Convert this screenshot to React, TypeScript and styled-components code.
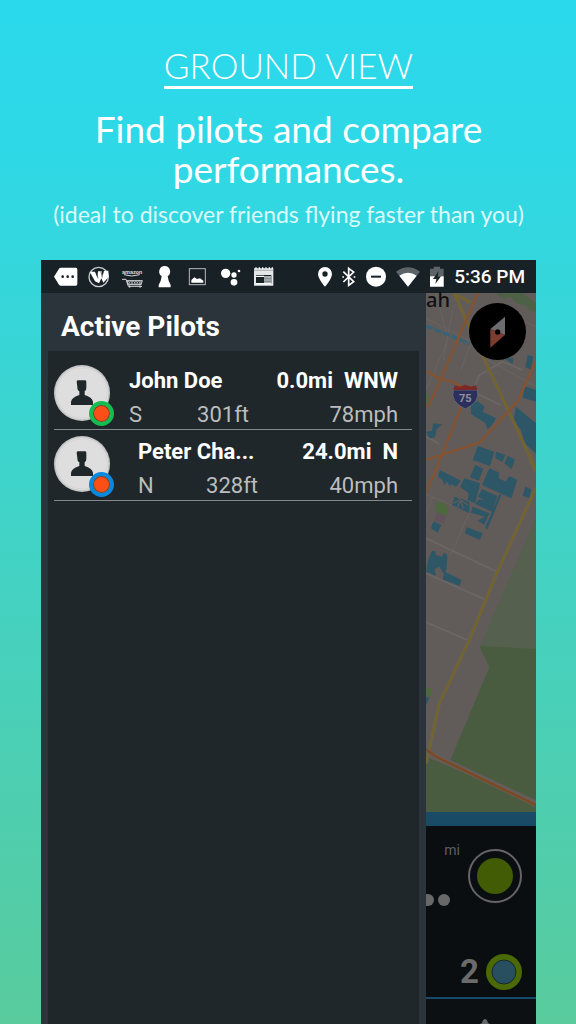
import React from "react";
import styled, { createGlobalStyle } from "styled-components";

const GlobalStyle = createGlobalStyle`
  *, *::before, *::after { box-sizing: border-box; }
  body { margin: 0; background: #59cb9f; }
  h1, h2, p, ul { margin: 0; padding: 0; }
`;

const Page = styled.main`
  min-height: 100vh;
  display: flex;
  flex-direction: column;
  padding: 0 40px 0 41px;
  background: linear-gradient(180deg, #2ad9ec 0%, #2fd8e5 16%, #59cb9d 100%);
  font-family: Roboto, "Liberation Sans", sans-serif;
  color: #fff;
`;

const Intro = styled.header`
  min-height: 260px;
  padding-top: 44px;
  text-align: center;
  font-family: Lato, "Open Sans", sans-serif;
`;

const Title = styled.h1`
  display: inline-block;
  border-bottom: 3px solid #fff;
  font-size: 35px;
  line-height: 42px;
  font-weight: 300;
`;

const Headline = styled.p`
  margin-top: 20px;
  font-size: 37px;
  line-height: 40px;
  font-weight: 400;
`;

const Note = styled.p`
  margin-top: 12px;
  font-size: 23px;
  line-height: 26px;
  font-weight: 400;
  white-space: nowrap;
  color: #dcfafa;
`;

const Phone = styled.section`
  flex: 1;
  display: flex;
  flex-direction: column;
  background: #2b343a;
`;

const StatusBar = styled.div`
  display: flex;
  justify-content: space-between;
  height: 33px;
  padding: 0 11px 0 9px;
  background: #182126;
`;

const StatusGroup = styled.div<{ $gap: number }>`
  display: flex;
  align-items: center;
  gap: ${(p) => p.$gap}px;
`;

const Clock = styled.time`
  font-size: 19px;
  line-height: 35px;
  font-weight: 500;
`;

const Screen = styled.div`
  flex: 1;
  display: grid;
  grid-template-columns: 7fr 2fr;
`;

const Drawer = styled.aside`
  display: flex;
  flex-direction: column;
  min-width: 0;
  padding: 0 7px;
`;

const DrawerTitle = styled.h2`
  height: 58px;
  padding: 5px 14px 0 13px;
  font-size: 28px;
  line-height: 58px;
  font-weight: 700;
`;

const PilotList = styled.ul`
  flex: 1;
  padding: 8px 7px 0 6px;
  list-style: none;
  background: #20272a;
`;

const PilotRow = styled.li`
  display: flex;
  height: 71px;
  border-bottom: 1px solid #85898a;
`;

const Avatar = styled.div`
  position: relative;
  flex: none;
  width: 60px;
  padding-top: 6px;
`;

const Status = styled.span<{ $ring: string }>`
  position: absolute;
  left: 35px;
  top: 42px;
  width: 25px;
  height: 25px;
  border-radius: 50%;
  border: 4px solid ${(p) => p.$ring};
  background: #fc4e17;
  box-shadow: inset 0 0 0 1px #6b4a2c;
`;

const Details = styled.div<{ $indent: number }>`
  flex: 1;
  display: grid;
  grid-template-columns: 120px 1fr;
  grid-template-rows: 32px 32px;
  row-gap: 2px;
  padding: 6px 14px 0 ${(p) => p.$indent}px;
  font-size: 22px;
  line-height: 32px;
  white-space: nowrap;
`;

const Name = styled.strong`
  font-weight: 700;
`;

const Range = styled.strong`
  display: flex;
  justify-content: flex-end;
  gap: 11px;
  font-weight: 700;
`;

const Heading = styled.span`
  display: flex;
  justify-content: space-between;
  color: #bbbdbe;
`;

const Speed = styled.span`
  text-align: right;
  color: #bbbdbe;
`;

const Side = styled.div`
  position: relative;
  display: flex;
  flex-direction: column;
  min-width: 0;
  background: #0a0e10;
`;

const MapView = styled.svg`
  display: block;
  width: 100%;
  height: 519px;
`;

const PlaceLabel = styled.span`
  position: absolute;
  top: 0;
  left: 0;
  font-family: "Noto Sans", sans-serif;
  font-size: 20px;
  line-height: 14px;
  font-weight: 500;
  color: #101010;
`;

const Compass = styled.button`
  position: absolute;
  top: 10px;
  right: 10px;
  width: 57px;
  height: 57px;
  padding: 0;
  border: 0;
  border-radius: 50%;
  background: #000;
`;

const Band = styled.div`
  height: 14px;
  background: #194b67;
`;

const Gauge = styled.div`
  display: flex;
  justify-content: flex-end;
  gap: 7px;
  height: 116px;
  padding: 15px 13px 0 0;
`;

const GaugeText = styled.div`
  display: flex;
  flex-direction: column;
  align-items: flex-end;
  justify-content: space-between;
  height: 65px;
  font-size: 14px;
  line-height: 18px;
  color: #5d6061;
`;

const RoundButton = styled.button`
  flex: none;
  display: block;
  width: 56px;
  height: 56px;
  margin-top: 7px;
  padding: 0;
  border: 0;
  background: none;
`;

const Counter = styled.div`
  display: flex;
  align-items: center;
  justify-content: flex-end;
  gap: 7px;
  height: 57px;
  padding: 4px 14px 0 0;
  border-bottom: 2px solid #17496a;
  font-size: 33px;
  line-height: 40px;
  font-weight: 700;
  color: #6b6b6b;
`;

const NextPanel = styled.div`
  flex: 1;
  display: flex;
  justify-content: center;
  min-height: 25px;
  padding-left: 8px;
  background: #0c1012;
`;

const LEFT_ICONS = [
  <path key="m" d="M42 65 57 41Q59 38 63 38H107Q112 38 112 43V87Q112 92 107 92H63Q59 92 57 89ZM64 65a4 4 0 1 0 8 0 4 4 0 1 0-8 0M79 65a4 4 0 1 0 8 0 4 4 0 1 0-8 0M94 65a4 4 0 1 0 8 0 4 4 0 1 0-8 0" fill="#fff" fillRule="evenodd" />,
  <g key="w">
    <circle cx="176" cy="66" r="29" fill="none" stroke="#c9cdcf" strokeWidth="4" />
    <path d="M149 50H165L172 67 174 49H185L188 64 192 47H205L206 66 190 83 184 70 177 85 165 79Z" fill="#fff" />
    <path d="M168 52 174 70M183 50 187 68" stroke="#182126" strokeWidth="2" />
  </g>,
  <g key="a" fill="none" stroke="#d4d7d8" strokeWidth="3">
    <text x="246" y="56" fontFamily="Roboto, sans-serif" fontSize="17" fontWeight="700" fill="#d4d7d8" stroke="none">amazon</text>
    <path d="M252 59Q275 67 299 59M246 73H258L265 94H306" />
    <path d="M261 77H307L303 89H265Z" />
    <path d="m264 77 8 12 8-12 8 12 8-12 7 12M264 89l8-12 8 12 8-12 8 12 8-12" strokeWidth="2" />
    <circle cx="269" cy="95" r="2" /><circle cx="300" cy="95" r="2" />
  </g>,
  <path key="k" d="M374 33A17 17 0 0 1 383 64Q385 80 392 90V97H356V90Q363 80 365 64A17 17 0 0 1 374 33Z" fill="#fff" />,
  <g key="p">
    <rect x="448" y="41" width="48" height="48" fill="none" stroke="#b5babc" strokeWidth="3" />
    <path d="M454 83V75L463 67 471 72 480 70 490 77V83Z" fill="#fff" />
  </g>,
  <g key="g" fill="#fff">
    <circle cx="557" cy="55" r="14" /><circle cx="582" cy="60" r="8" />
    <circle cx="582" cy="82" r="10" /><circle cx="597" cy="48" r="4" />
  </g>,
  <g key="c">
    <path d="M642 40H700V92H642ZM648 60V86H694V60Z" fill="#e4e6e7" fillRule="evenodd" />
    <path d="M648 43V37M658 43V37M668 43V37M678 43V37M688 43V37M697 43V37" stroke="#fff" strokeWidth="4" />
    <path d="M642 46H700" stroke="#8d9497" strokeWidth="2" />
    <path d="M672 63H694V86H672Z" fill="#a9aeb0" />
    <path d="M648 64H672M648 86H694" stroke="#fff" strokeWidth="4" />
    <path d="M672 71H694M672 79H694" stroke="#6f777b" strokeWidth="2" />
  </g>,
];

const RIGHT_ICONS = [
  { x: 84, w: 14, art: <path d="M105 36A21 21 0 0 0 84 57C84 72 105 95 105 95S126 72 126 57A21 21 0 0 0 105 36ZM105 49a8 8 0 1 1 0 16 8 8 0 1 1 0-16Z" fill="#fff" fillRule="evenodd" /> },
  { x: 159, w: 14, art: <g fill="none" stroke="#fff" strokeWidth="5"><path d="M163 50 194 80 179 91V40L194 51 163 81" /><path d="M160 66h5M194 66h5" /></g> },
  { x: 231, w: 20, art: <g><circle cx="261" cy="65" r="30" fill="#fff" /><path d="M246 65H276" stroke="#182126" strokeWidth="6" /></g> },
  { x: 318, w: 24, art: <g><path d="M318 50Q354 24 390 50L354 95Z" fill="#5c6468" /><path d="M328 62Q354 44 380 62L354 95Z" fill="#fff" /></g> },
  { x: 420, w: 14, art: <g><path d="M420 41H431V35H450V41H461V95H420Z" fill="#5c6468" /><path d="M420 64H461V95H420Z" fill="#fff" /><path d="M446 48 429 72H439L436 87 453 64H443Z" fill="#182126" /></g> },
];

const Person = () => (
  <svg width="56" height="56" viewBox="0 0 168 168" role="img" aria-label="Pilot">
    <circle cx="84" cy="84" r="84" fill="#c6c6c6" />
    <circle cx="84" cy="84" r="79" fill="#dedede" />
    <circle cx="84" cy="84" r="75" fill="none" stroke="#d2d2d2" strokeWidth="2" />
    <path d="M68 50Q68 46 73 46H94Q97 46 97 51V68Q97 77 92 79V90Q114 96 117 110V120H51V110Q54 96 76 90V79Q70 77 70 66Z" fill="#20272a" />
  </svg>
);

const CityMap = () => (
  <MapView viewBox="30 9 330 1557" preserveAspectRatio="xMidYMid slice" role="img" aria-label="Map">
    <rect x="-600" y="9" width="1600" height="1557" fill="#615c59" />
    <path d="M360 680V1140L190 1068Q205 1055 200 1050Z" fill="#55604e" />
    <path d="M360 1077 190 1068 220 1132 103 1410 360 1530ZM30 1400 360 1540V1566H30Z" fill="#4a5c40" />
    <path d="M238 9 262 28 282 20 300 40 325 45 345 62 360 65V38L340 25 320 9Z" fill="#4e6146" />
    <path d="M30 312 40 318 37 333 30 340ZM30 1190 45 1195 46 1212 36 1218 30 1215Z" fill="#4c6a3d" />
    <path d="M58 640 80 636 98 655 92 680 60 667Z" fill="#4f673e" />
    <path d="M62 667 90 678 82 702 55 692Z" fill="#61525b" />
    <g fill="none" stroke="#6a6867" strokeWidth="5">
      <path d="M30 85 200 172M60 9 96 150 30 300M110 60 82 210M190 90 135 240M240 60 360 110M30 612 160 668 102 800M50 622 30 670M180 190 360 290" strokeWidth="2" />
      <path d="M318 240 260 215 190 255 160 330M180 310 255 346M30 440 70 462M30 745 245 846M30 850 205 928M30 997 155 1050" />
    </g>
    <path d="M30 108 135 150 160 162" stroke="#356277" strokeWidth="9" strokeDasharray="22 5" fill="none" />
    <g fill="#2d5667">
      <path d="M165 345 185 333 205 350 200 365 240 385 232 400 215 418 207 398 165 372Z" />
      <path d="M335 195 352 200 345 238 328 232ZM325 288 360 300V335L320 323ZM300 350 360 400V490L325 460 315 420 292 390ZM265 205 292 205 290 222Z" />
      <path d="M185 468 235 485 222 528 170 510ZM240 485 268 495 260 515 238 505ZM275 498 297 508 287 538 265 520Z" />
      <path d="M52 400 78 403 62 418 57 442 40 445 30 425 48 422Z" />
      <path d="M72 540 135 572 120 590 105 582 102 590 92 574 86 586 78 568 66 560Z" />
      <path d="M178 524 202 536 188 572 162 562ZM145 565 192 580 178 640 155 630 158 610 132 590ZM220 535 250 548 248 565 270 575 280 558 304 570 286 625 198 585Z" />
      <path d="M198 597 244 618 228 665 178 642 188 628 205 630 186 620ZM170 650 220 670 205 704 184 692 206 680 165 668ZM250 612 256 615 214 718 207 714ZM116 620 160 635V670L108 645Z" />
      <path d="M153 712 200 730 192 750 146 730ZM328 590 346 598 340 625 320 617ZM52 694 76 705 65 728 45 715Z" />
      <path d="M48 782 60 785 58 795 78 800 84 788 94 795 92 832 86 856 70 830 56 838 60 857 30 845 38 805ZM86 845 137 870 130 888 80 868ZM30 1221 41 1223 30 1246Z" />
    </g>
    <path d="M130 630 112 640M132 632 125 652M134 632 142 656M134 630 156 646M132 628 124 618" stroke="#615c59" strokeWidth="4" />
    <g fill="none">
      <path d="M115 9 150 90 360 540M115 12 165 38M342 509 360 545M360 592 240 855 160 1050 70 1240 30 1420" stroke="#67625b" strokeWidth="11" />
      <path d="M115 9 150 90 360 540M115 12 165 38M342 509 360 545M360 592 240 855 160 1050 70 1240 30 1420" stroke="#74632b" strokeWidth="7" />
      <path d="M185 9 74 268 42 340 30 350M30 243 74 268 100 272 140 290M360 210 308 330 190 458 30 510M140 340 60 540 30 605" stroke="#855331" strokeWidth="7" />
      <path d="M30 1378 60 1400 360 1545" stroke="#67635a" strokeWidth="13" />
      <path d="M30 1378 60 1400 360 1545" stroke="#7b4828" strokeWidth="8" />
    </g>
    <path d="M112 300H184Q194 335 148 357 102 335 112 300Z" fill="#2a2f5e" stroke="#77777c" strokeWidth="2" />
    <path d="M112 300 116 286 132 290 148 284 164 290 180 286 184 300Z" fill="#7b2826" />
    <text x="148" y="336" textAnchor="middle" fontFamily="Roboto, sans-serif" fontWeight="700" fontSize="33" fill="#919197">75</text>
  </MapView>
);

const PILOTS = [
  { name: "John Doe", distance: "0.0mi", bearing: "WNW", heading: "S", altitude: "301ft", speed: "78mph", ring: "#14bd52", indent: 15 },
  { name: "Peter Cha...", distance: "24.0mi", bearing: "N", heading: "N", altitude: "328ft", speed: "40mph", ring: "#0789df", indent: 24 },
];

export default function App() {
  return (
    <Page>
      <GlobalStyle />
      <Intro>
        <Title>GROUND VIEW</Title>
        <Headline>Find pilots and compare performances.</Headline>
        <Note>(ideal to discover friends flying faster than you)</Note>
      </Intro>
      <Phone>
        <StatusBar>
          <StatusGroup $gap={0}>
            {LEFT_ICONS.map((art, i) => (
              <svg key={i} width="33" height="33" viewBox={`${30 + 99 * i} 15 99 99`} aria-hidden="true">{art}</svg>
            ))}
          </StatusGroup>
          <StatusGroup $gap={10}>
            {RIGHT_ICONS.map(({ x, w, art }) => (
              <svg key={x} width={w} height="33" viewBox={`${x} 15 ${w * 3} 99`} aria-hidden="true">{art}</svg>
            ))}
            <Clock>5:36 PM</Clock>
          </StatusGroup>
        </StatusBar>
        <Screen>
          <Drawer>
            <DrawerTitle>Active Pilots</DrawerTitle>
            <PilotList>
              {PILOTS.map((p) => (
                <PilotRow key={p.name}>
                  <Avatar>
                    <Person />
                    <Status $ring={p.ring} />
                  </Avatar>
                  <Details $indent={p.indent}>
                    <Name>{p.name}</Name>
                    <Range><span>{p.distance}</span><span>{p.bearing}</span></Range>
                    <Heading><span>{p.heading}</span><span>{p.altitude}</span></Heading>
                    <Speed>{p.speed}</Speed>
                  </Details>
                </PilotRow>
              ))}
            </PilotList>
          </Drawer>
          <Side>
            <CityMap />
            <PlaceLabel>ah</PlaceLabel>
            <Compass aria-label="Compass">
              <svg width="57" height="57" viewBox="0 0 171 171" aria-hidden="true">
                <path d="M64 78 108 41V96Z" fill="#6d6d6f" />
                <path d="M64 78 108 96 64 134Z" fill="#7b3d30" />
                <circle cx="86" cy="87" r="8" />
              </svg>
            </Compass>
            <Band />
            <Gauge>
              <GaugeText>
                <span>mi</span>
                <svg width="34" height="12" viewBox="0 0 34 12" aria-hidden="true" fill="#686868">
                  <circle cx="2" cy="6" r="6" />
                  <circle cx="18" cy="6" r="6" />
                </svg>
              </GaugeText>
              <RoundButton aria-label="Start">
                <svg width="56" height="56" viewBox="0 0 56 56" aria-hidden="true">
                  <circle cx="28" cy="28" r="26" fill="none" stroke="#656467" strokeWidth="2" />
                  <circle cx="28" cy="28" r="18" fill="#425b05" />
                </svg>
              </RoundButton>
            </Gauge>
            <Counter>
              <span>2</span>
              <svg width="36" height="36" viewBox="0 0 36 36" aria-hidden="true">
                <circle cx="18" cy="18" r="18" fill="#4b6a05" />
                <circle cx="18" cy="18" r="12" fill="#284f5f" stroke="#17282c" strokeWidth="1" />
              </svg>
            </Counter>
            <NextPanel>
              <svg width="10" height="25" viewBox="0 0 10 25" aria-hidden="true">
                <path d="M0 25 2 24Q3 20 5 20T8 24L10 25Z" fill="#666" />
              </svg>
            </NextPanel>
          </Side>
        </Screen>
      </Phone>
    </Page>
  );
}
